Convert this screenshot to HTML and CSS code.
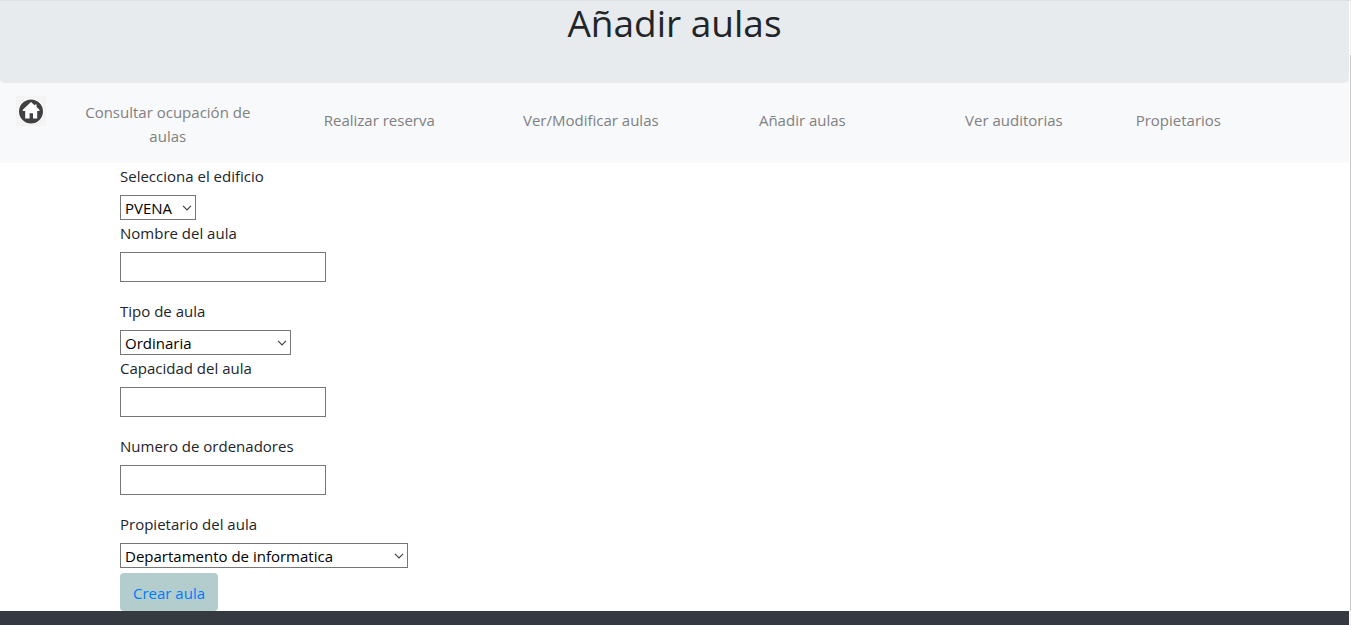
FILE: index.html
```html
<!DOCTYPE html>
<html lang="es">
<head>
<meta charset="utf-8">
<meta name="viewport" content="width=device-width, initial-scale=1">
<title>Añadir aulas</title>
<link rel="stylesheet" href="styles.css">
</head>
<body>
<div class="page">
  <header class="banner"><h1 class="banner-title">Añadir aulas</h1></header>
  <nav class="nav">
    <a class="nav-home" href="#" aria-label="Inicio">
      <svg class="home-icon" viewBox="0 0 30 30" aria-hidden="true">
        <rect width="30" height="30" fill="#f4f4f4"/>
        <circle cx="15" cy="15" r="13.6" fill="#fff" stroke="#ececec" stroke-width=".6"/>
        <circle cx="15" cy="15.4" r="12" fill="#414144"/>
        <path d="M15 6 18.8 9.4V8.4H20.6V11.1L23.4 13.8V15H21.2V22.6H17V17.2H13.6V22.6H9.2V15H6.8V13.8Z" fill="#fff"/>
      </svg>
    </a>
    <a class="nav-link nav-link-tall" href="#">Consultar ocupación de aulas</a>
    <a class="nav-link" href="#">Realizar reserva</a>
    <a class="nav-link" href="#">Ver/Modificar aulas</a>
    <a class="nav-link" href="#">Añadir aulas</a>
    <a class="nav-link" href="#">Ver auditorias</a>
    <a class="nav-link" href="#">Propietarios</a>
  </nav>
  <form class="form">
    <div class="field">
      <label class="label" for="edificio">Selecciona el edificio</label>
      <select class="control select select-short" id="edificio"><option>PVENA</option></select>
    </div>
    <div class="field field-spaced">
      <label class="label" for="nombre">Nombre del aula</label>
      <input class="control text" id="nombre" type="text">
    </div>
    <div class="field">
      <label class="label" for="tipo">Tipo de aula</label>
      <select class="control select select-medium" id="tipo"><option>Ordinaria</option></select>
    </div>
    <div class="field field-spaced">
      <label class="label" for="capacidad">Capacidad del aula</label>
      <input class="control text" id="capacidad" type="text">
    </div>
    <div class="field field-spaced">
      <label class="label" for="ordenadores">Numero de ordenadores</label>
      <input class="control text" id="ordenadores" type="text">
    </div>
    <div class="field">
      <label class="label" for="propietario">Propietario del aula</label>
      <select class="control select select-long" id="propietario"><option>Departamento de informatica</option></select>
    </div>
    <button class="submit" type="button">Crear aula</button>
  </form>
  <footer class="footer"></footer>
</div>
<div class="track"><div class="thumb"></div></div>
</body>
</html>
```
FILE: styles.css
```css
* {
  box-sizing: border-box;
}

body {
  display: flex;
  gap: 1px;
  min-height: 100vh;
  margin: 0;
  border-top: 1px solid #dee0e2;
  background: #fff;
  color: #212529;
  font: 15px/24px "Open Sans", "Noto Sans", sans-serif;
}

.page {
  display: flex;
  flex: 1;
  flex-direction: column;
  background: #f8f9fb;
}

.banner {
  padding-bottom: 38px;
  border-radius: 0 0 5px 5px;
  background: #e8ebee;
  text-align: center;
}

.banner-title {
  margin: 0;
  font-size: 37px;
  font-weight: 400;
  line-height: 44px;
}

.nav {
  display: grid;
  grid-template-columns: 62px repeat(5, 1fr) auto;
  align-items: center;
  min-height: 80px;
  padding: 8px 112px 8px 0;
}

.nav-home {
  align-self: start;
  padding: 5px 16px;
}

.home-icon {
  display: block;
  width: 30px;
  height: 30px;
}

.nav-link {
  padding: 0 16px 6px;
  color: #808080;
  text-align: center;
  text-decoration: none;
}

.nav-link-tall {
  padding: 2px 20px 0;
}

.form {
  display: flex;
  flex-direction: column;
  align-items: flex-start;
  padding-left: 120px;
  background: #fff;
}

.field {
  display: flex;
  flex-direction: column;
  align-items: flex-start;
  gap: 6px;
}

.field-spaced {
  margin-bottom: 16px;
}

.label {
  line-height: 26px;
}

.control {
  margin: 0;
  border: 1px solid #767676;
  border-radius: 0;
  background: #fff;
  color: #000;
  font: inherit;
}

.text {
  width: 206px;
  height: 30px;
  padding: 1px 2px;
}

.select {
  height: 25px;
  padding: 0 20px 0 4px;
  appearance: none;
  background: #fff url("data:image/svg+xml,%3Csvg xmlns='http://www.w3.org/2000/svg' width='10' height='6'%3E%3Cpath d='M1 .8 5 4.8 9 .8' fill='none' stroke='%23444' stroke-width='1.2'/%3E%3C/svg%3E") no-repeat right 3px center;
}

.select-short {
  width: 76px;
}

.select-medium {
  width: 171px;
}

.select-long {
  width: 288px;
}

.submit {
  margin: 5px 0 0;
  padding: 8px 13px 6px;
  border: 0;
  border-radius: 4px;
  background: #b2cdcb;
  color: #007bff;
  font: inherit;
}

.footer {
  flex: 1;
  min-height: 14px;
  background: #343a40;
}

.track {
  display: flex;
  flex-direction: column;
  width: 1px;
  padding: 54px 0 15px;
  background: #f1f1f1;
}

.thumb {
  flex: 1;
  background: #c8c8c8;
}
```
